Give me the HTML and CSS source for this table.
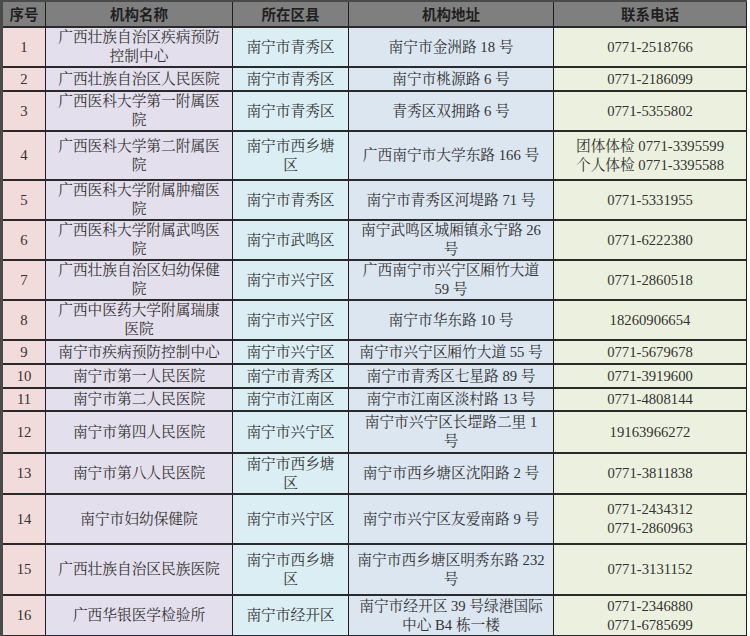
FILE: index.html
```html
<!DOCTYPE html>
<html lang="zh-CN">
<head>
<meta charset="utf-8">
<title>机构列表</title>
<link rel="stylesheet" href="styles.css">
</head>
<body>
<table class="sheet">
  <colgroup>
    <col class="c-no"><col class="c-name"><col class="c-area"><col class="c-addr"><col class="c-tel">
  </colgroup>
  <thead>
    <tr class="h-head">
      <th>序号</th><th>机构名称</th><th>所在区县</th><th>机构地址</th><th>联系电话</th>
    </tr>
  </thead>
  <tbody>
    <tr class="h40"><td class="no">1</td><td class="name">广西壮族自治区疾病预防<br>控制中心</td><td class="area">南宁市青秀区</td><td class="addr">南宁市金洲路 18 号</td><td class="tel">0771-2518766</td></tr>
    <tr class="h24"><td class="no">2</td><td class="name">广西壮族自治区人民医院</td><td class="area">南宁市青秀区</td><td class="addr">南宁市桃源路 6 号</td><td class="tel">0771-2186099</td></tr>
    <tr class="h40"><td class="no">3</td><td class="name">广西医科大学第一附属医<br>院</td><td class="area">南宁市青秀区</td><td class="addr">青秀区双拥路 6 号</td><td class="tel">0771-5355802</td></tr>
    <tr class="h49"><td class="no">4</td><td class="name">广西医科大学第二附属医<br>院</td><td class="area">南宁市西乡塘<br>区</td><td class="addr">广西南宁市大学东路 166 号</td><td class="tel">团体体检 0771-3395599<br>个人体检 0771-3395588</td></tr>
    <tr class="h40"><td class="no">5</td><td class="name">广西医科大学附属肿瘤医<br>院</td><td class="area">南宁市青秀区</td><td class="addr">南宁市青秀区河堤路 71 号</td><td class="tel">0771-5331955</td></tr>
    <tr class="h40"><td class="no">6</td><td class="name">广西医科大学附属武鸣医<br>院</td><td class="area">南宁市武鸣区</td><td class="addr">南宁武鸣区城厢镇永宁路 26<br>号</td><td class="tel">0771-6222380</td></tr>
    <tr class="h39"><td class="no">7</td><td class="name">广西壮族自治区妇幼保健<br>院</td><td class="area">南宁市兴宁区</td><td class="addr">广西南宁市兴宁区厢竹大道<br>59 号</td><td class="tel">0771-2860518</td></tr>
    <tr class="h40"><td class="no">8</td><td class="name">广西中医药大学附属瑞康<br>医院</td><td class="area">南宁市兴宁区</td><td class="addr">南宁市华东路 10 号</td><td class="tel">18260906654</td></tr>
    <tr class="h24"><td class="no">9</td><td class="name">南宁市疾病预防控制中心</td><td class="area">南宁市兴宁区</td><td class="addr">南宁市兴宁区厢竹大道 55 号</td><td class="tel">0771-5679678</td></tr>
    <tr class="h24"><td class="no">10</td><td class="name">南宁市第一人民医院</td><td class="area">南宁市青秀区</td><td class="addr">南宁市青秀区七星路 89 号</td><td class="tel">0771-3919600</td></tr>
    <tr class="h23"><td class="no">11</td><td class="name">南宁市第二人民医院</td><td class="area">南宁市江南区</td><td class="addr">南宁市江南区淡村路 13 号</td><td class="tel">0771-4808144</td></tr>
    <tr class="h42"><td class="no">12</td><td class="name">南宁市第四人民医院</td><td class="area">南宁市兴宁区</td><td class="addr">南宁市兴宁区长堽路二里 1<br>号</td><td class="tel">19163966272</td></tr>
    <tr class="h41"><td class="no">13</td><td class="name">南宁市第八人民医院</td><td class="area">南宁市西乡塘<br>区</td><td class="addr">南宁市西乡塘区沈阳路 2 号</td><td class="tel">0771-3811838</td></tr>
    <tr class="h50"><td class="no">14</td><td class="name">南宁市妇幼保健院</td><td class="area">南宁市兴宁区</td><td class="addr">南宁市兴宁区友爱南路 9 号</td><td class="tel">0771-2434312<br>0771-2860963</td></tr>
    <tr class="h51"><td class="no">15</td><td class="name">广西壮族自治区民族医院</td><td class="area">南宁市西乡塘<br>区</td><td class="addr">南宁市西乡塘区明秀东路 232<br>号</td><td class="tel">0771-3131152</td></tr>
    <tr class="h41"><td class="no">16</td><td class="name">广西华银医学检验所</td><td class="area">南宁市经开区</td><td class="addr">南宁市经开区 39 号绿港国际<br>中心 B4 栋一楼</td><td class="tel">0771-2346880<br>0771-6785699</td></tr>
  </tbody>
</table>
</body>
</html>
```

FILE: styles.css
```css
html, body {
  margin: 0;
  padding: 0;
  background: #ffffff;
  overflow: hidden;
}

.sheet {
  border-collapse: separate;
  border-spacing: 0;
  table-layout: fixed;
  width: 747px;
  border-left: 3px solid #4a4a4a;
  border-top: 2px solid #4a4a4a;
  font-family: "Liberation Serif", "Noto Serif CJK SC", "Noto Sans CJK SC", serif;
  font-size: 14.7px;
  line-height: 19px;
  color: #333333;
}

.c-no { width: 43px; }
.c-name { width: 187px; }
.c-area { width: 116px; }
.c-addr { width: 205px; }
.c-tel { width: 193px; }

.sheet th,
.sheet td {
  padding: 0;
  text-align: center;
  vertical-align: middle;
  white-space: nowrap;
  overflow: hidden;
  border-right: 1px solid #1e1e1e;
  border-bottom: 2px solid #2a2a2a;
}

.sheet th {
  background: #7f7f7f;
  color: #1f1f1f;
  font-family: "Noto Sans CJK SC", "Liberation Sans", sans-serif;
  font-weight: 700;
  font-size: 14.5px;
  line-height: 18px;
}

.h-head { height: 26px; }
.h23 { height: 23px; }
.h24 { height: 24px; }
.h39 { height: 39px; }
.h40 { height: 40px; }
.h41 { height: 41px; }
.h42 { height: 42px; }
.h49 { height: 49px; }
.h50 { height: 50px; }
.h51 { height: 51px; }

.no { background: #f2dcdb; }
.name { background: #e4dfec; }
.area { background: #dbeef3; }
.addr { background: #dce6f1; }
.tel { background: #ebf1de; }
```
